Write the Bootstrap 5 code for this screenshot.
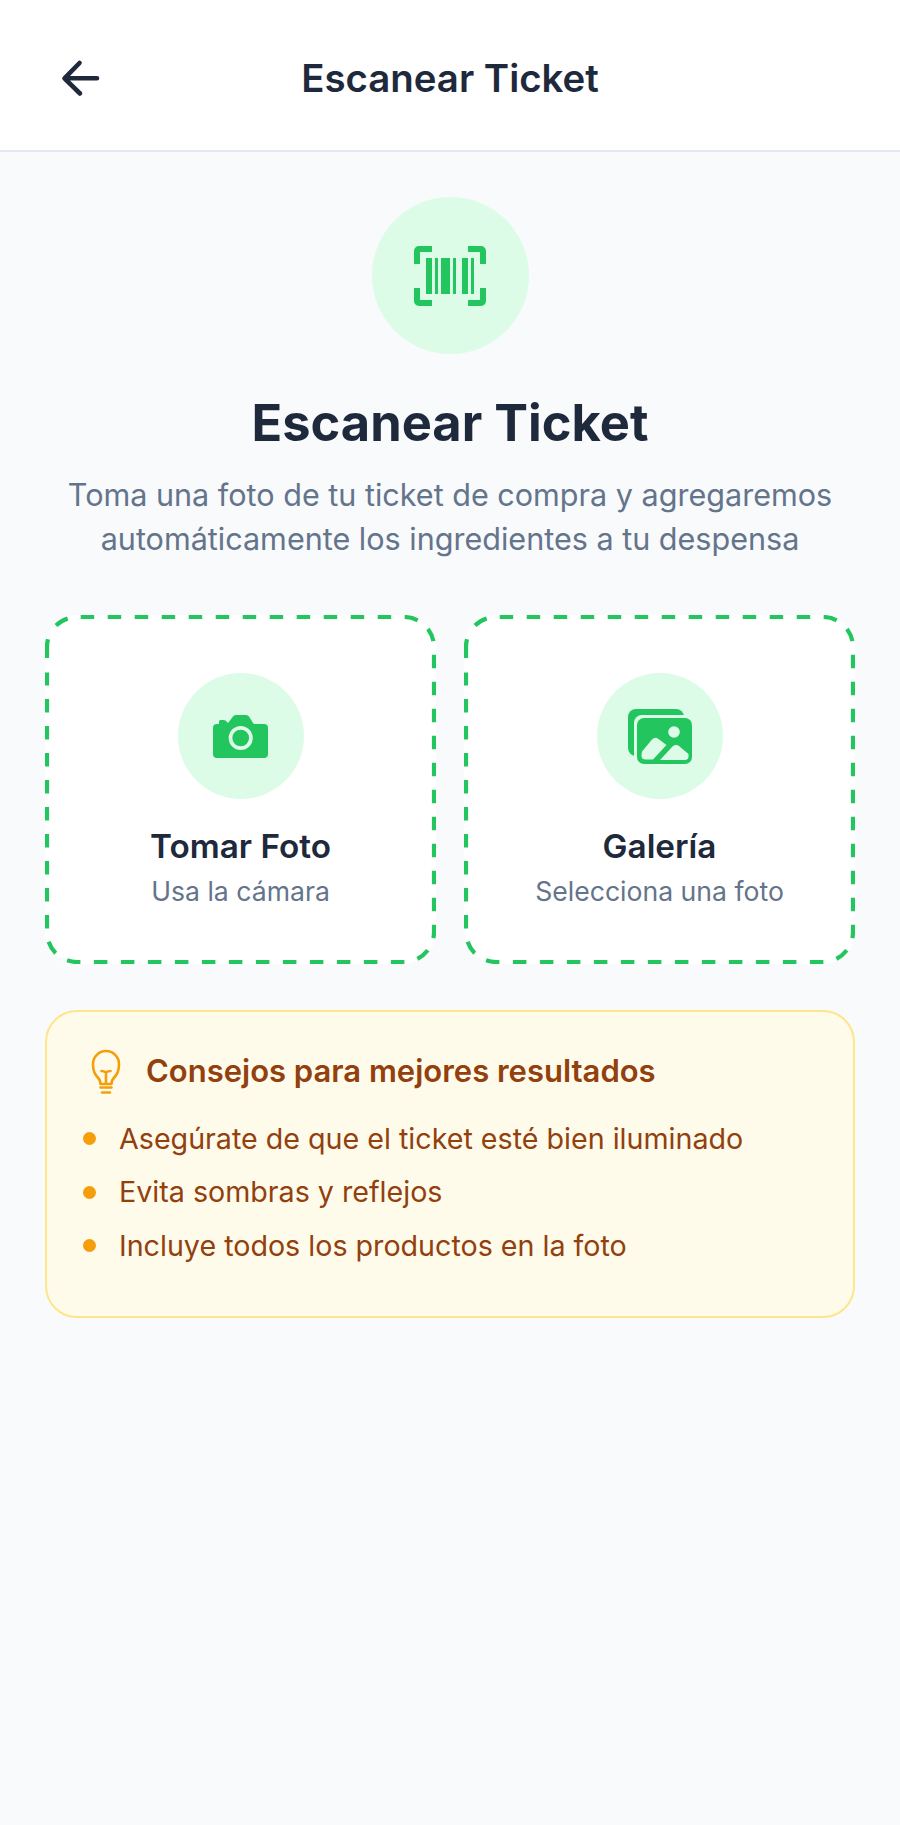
<!DOCTYPE html>
<html lang="es">
<head>
<meta charset="utf-8">
<title>Escanear Ticket</title>
<link href="https://cdn.jsdelivr.net/npm/bootstrap@5.3.0/dist/css/bootstrap.min.css" rel="stylesheet">
<style>
html,body{height:100%}
body{background:#f8fafc;font-family:Inter,"Liberation Sans",sans-serif;color:#1e293b;margin:0}
.top-bar{height:152px;background:#fff;border-bottom:2.500px solid #e2e8f0;padding:6px 45px 0}
.top-title{font-size:38.400px;font-weight:600;line-height:1}
.back-ic{width:59px;height:44px;flex:none}
.spacer-ic{width:59px}
.page-body{padding:45px 45px 0}
.hero-disc{width:157px;height:157px;background:#dcfce7}
.hero-title{font-size:50.600px;font-weight:700;line-height:60px;margin:39px 0 20px;color:#1e293b}
.hero-sub{font-size:30.560px;line-height:44px;color:#64748b;margin:0}
.pick-row{gap:28px;margin-top:54px}
.pick-box{flex:1 1 0;height:349px;background:#fff;border-radius:32px;padding-top:58px}
.dash-frame{inset:0;width:391px;height:349px}
.dash-line{fill:none;stroke:#22c55e;stroke-width:4.200px;stroke-dasharray:13.500 13.500;stroke-dashoffset:-3.700}
.dash-solo{fill:none;stroke:#22c55e;stroke-width:4.200px}
.pick-disc{width:126px;height:126px;background:#dcfce7}
.pick-title{font-size:33.300px;font-weight:600;line-height:38px;margin-top:28px;color:#1e293b}
.pick-sub{font-size:26.600px;line-height:30px;margin-top:11px;color:#64748b}
.tips-box{margin-top:46px;height:308px;background:#fffbeb;border:2.500px solid #fde68a;border-radius:32px;padding:34px 43px 0 36px}
.tips-title{font-size:31px;font-weight:600;color:#92400e;line-height:42px}
.tips-list{margin:26.500px 0 0;padding:0;list-style:none}
.tips-list li{font-size:28.650px;line-height:34px;color:#92400e;margin-bottom:19.500px}
.tip-dot{width:13px;height:13px;background:#f59e0b;margin-right:23px}
.tips-ic{width:30px;height:46px;margin:3px 25px 0 8px;flex:none}
</style>
</head>
<body>
<header class="top-bar d-flex align-items-center justify-content-between">
  <svg class="back-ic" viewBox="-15 0 59 44" fill="none" stroke="#1e293b" stroke-width="4.600" stroke-linecap="round" stroke-linejoin="round"><path d="M37 22.300H5M19.500 7 4.500 22.300 20 37.500"/></svg>
  <div class="top-title">Escanear Ticket</div>
  <div class="spacer-ic"></div>
</header>
<main class="page-body">
  <div class="text-center">
    <div class="hero-disc rounded-circle d-flex align-items-center justify-content-center mx-auto">
      <svg width="72" height="60" viewBox="0 0 72 60" fill="#22c55e"><path d="M0 18V5a5 5 0 0 1 5-5h13v6H6v12zM54 0h13a5 5 0 0 1 5 5v13h-6V6H54zM0 42h6v12h12v6H5a5 5 0 0 1-5-5zM66 42h6v13a5 5 0 0 1-5 5H54v-6h12z"/><path d="M12 12h6v36h-6zM21 12h3v36h-3zM27 12h9v36h-9zM39 12h3v36h-3zM48 12h6v36h-6zM57 12h3v36h-3z"/></svg>
    </div>
    <h1 class="hero-title">Escanear Ticket</h1>
    <p class="hero-sub">Toma una foto de tu ticket de compra y agregaremos<br>automáticamente los ingredientes a tu despensa</p>
  </div>
  <div class="pick-row d-flex">
    <div class="pick-box text-center position-relative">
      <svg class="dash-frame position-absolute" viewBox="0 0 391 349"><path class="dash-line" d="M32 2H359A30 30 0 0 1 389 32V317A30 30 0 0 1 359 347H32A30 30 0 0 1 2 317V57.500"/><path class="dash-solo" d="M2 43V32A30 30 0 0 1 3 24.200M11 10.600A30 30 0 0 1 22.700 3.500"/></svg>
      <div class="pick-disc rounded-circle d-flex align-items-center justify-content-center mx-auto">
        <svg width="55" height="43" viewBox="0 0 55 43"><path fill="#22c55e" d="M4 9H6V6.500Q6 5 7.500 5H11Q12.500 5 13.500 6.500L15 8 20 1.500Q21 0 23 0H33Q35 0 36 1.500L40 8Q40.500 9 42 9H51a4 4 0 0 1 4 4V39a4 4 0 0 1-4 4H4a4 4 0 0 1-4-4V13a4 4 0 0 1 4-4z"/><circle cx="27.700" cy="23" r="10.200" fill="none" stroke="#dcfce7" stroke-width="3.700"/></svg>
      </div>
      <div class="pick-title">Tomar Foto</div>
      <div class="pick-sub">Usa la cámara</div>
    </div>
    <div class="pick-box text-center position-relative">
      <svg class="dash-frame position-absolute" viewBox="0 0 391 349"><path class="dash-line" d="M32 2H359A30 30 0 0 1 389 32V317A30 30 0 0 1 359 347H32A30 30 0 0 1 2 317V57.500"/><path class="dash-solo" d="M2 43V32A30 30 0 0 1 3 24.200M11 10.600A30 30 0 0 1 22.700 3.500"/></svg>
      <div class="pick-disc rounded-circle d-flex align-items-center justify-content-center mx-auto">
        <svg width="64" height="55" viewBox="0 0 64 55"><rect width="56" height="47" rx="8" fill="#22c55e"/><rect x="6" y="6" width="58" height="49" rx="8" fill="#dcfce7"/><rect x="9" y="9" width="55" height="46" rx="7" fill="#22c55e"/><circle cx="46" cy="23" r="5.800" fill="#dcfce7"/><path fill="#dcfce7" d="M14 42.500 24 30.500Q27 27.500 30.500 30L38.500 36 25 50.500H17Q13 50 13.500 46zM32 51 44.500 37.500Q48 35 51 37L60.500 45V48Q60 51 57 51z"/></svg>
      </div>
      <div class="pick-title">Galería</div>
      <div class="pick-sub">Selecciona una foto</div>
    </div>
  </div>
  <section class="tips-box">
    <div class="d-flex align-items-center">
      <svg class="tips-ic" viewBox="0 0 30 46" fill="none" stroke="#f59e0b" stroke-width="2.600" stroke-linecap="round" stroke-linejoin="round"><path d="M9.500 35C9.500 31.500 8 29.500 6 27.500 3.500 25 2 21 2 15A13 13 0 0 1 28 15C28 21 26.500 25 24 27.500 22 29.500 20.500 31.500 20.500 35z"/><path d="M15 34V23M10.500 22Q13 22 15 23.500 17 22 19.500 22M9.500 38.500H20.500M11 43.500H19"/></svg>
      <div class="tips-title">Consejos para mejores resultados</div>
    </div>
    <ul class="tips-list">
      <li class="d-flex align-items-center"><span class="tip-dot rounded-circle flex-shrink-0"></span>Asegúrate de que el ticket esté bien iluminado</li>
      <li class="d-flex align-items-center"><span class="tip-dot rounded-circle flex-shrink-0"></span>Evita sombras y reflejos</li>
      <li class="d-flex align-items-center"><span class="tip-dot rounded-circle flex-shrink-0"></span>Incluye todos los productos en la foto</li>
    </ul>
  </section>
</main>
<script src="https://cdn.jsdelivr.net/npm/bootstrap@5.3.0/dist/js/bootstrap.bundle.min.js"></script>
</body>
</html>
